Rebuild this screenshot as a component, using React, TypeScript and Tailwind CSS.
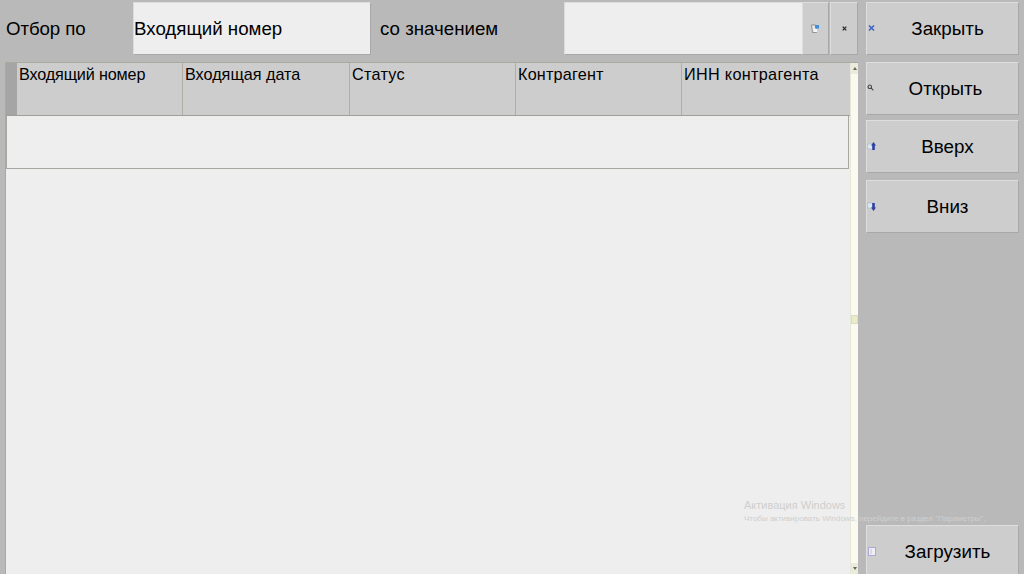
const cols = [
  { t: "Входящий номер", w: "w-[166px]", s: "tracking-[-0.15px]" },
  { t: "Входящая дата", w: "w-[167px]", s: "" },
  { t: "Статус", w: "w-[166px]", s: "tracking-[0.3px]" },
  { t: "Контрагент", w: "w-[166px]", s: "tracking-[0.2px]" },
  { t: "ИНН контрагента", w: "flex-1", s: "tracking-[0.33px]" },
];

function Btn({ label, icon, pad = "pl-[10px]" }: { label: string; icon: React.ReactNode; pad?: string }) {
  return (
    <div className={`relative h-[53px] w-[153px] flex items-center justify-center ${pad} pt-[1px] bg-[#cdcdcd] border border-t-[#dedede] border-l-[#dedede] border-b-[#a8a8a8] border-r-[#a8a8a8] text-[18.8px] text-black`}>
      <span className="absolute left-[1px] top-1/2 -mt-[5px] flex">{icon}</span>
      {label}
    </div>
  );
}

const CloseIcon = () => (
  <svg width="8" height="8" viewBox="0 0 8 8"><path d="M1 1.500l5 5M6 1.500l-5 5" stroke="#3a62c0" strokeWidth="1.500" /></svg>
);
const SearchIcon = () => (
  <svg width="7" height="7" viewBox="0 0 8 8" fill="none" className="-ml-[1px]"><circle cx="3.200" cy="3.200" r="2" stroke="#444" strokeWidth="1.200" /><path d="M4.800 4.800l2.500 2.500" stroke="#444" strokeWidth="1.200" /></svg>
);
const UpIcon = () => (
  <svg width="9" height="9" viewBox="0 0 9 9" className="-ml-[1px]"><rect x="0.500" y="2" width="6" height="5" fill="#dce8f0" stroke="#9fb6c6" strokeWidth="0.600" /><path d="M6.500 0L9 3.500H7.800V8H5.200V3.500H4z" fill="#2f3f9f" /></svg>
);
const DownIcon = () => (
  <svg width="9" height="9" viewBox="0 0 9 9" className="-ml-[1px]"><rect x="0.500" y="1" width="6" height="5" fill="#dce8f0" stroke="#9fb6c6" strokeWidth="0.600" /><path d="M6.500 9L9 5.500H7.800V1H5.200V5.500H4z" fill="#2f3f9f" /></svg>
);
const LoadIcon = () => (
  <svg width="8" height="9" viewBox="0 0 8 9"><rect x="0.500" y="0.500" width="7" height="8" fill="#f1eef5" stroke="#a9a9d6" /><rect x="2" y="2" width="2" height="5" fill="#e3d4dc" /></svg>
);

export default function App() {
  return (
    <div className="relative w-[1024px] h-[574px] overflow-hidden bg-[#b9b9b9] flex font-['Liberation_Sans',Arial,sans-serif] text-black">
      <div className="w-[866px] flex flex-col pl-[5px] pt-[2px]">
        <div className="h-[53px] flex items-center text-[18.7px]">
          <div className="w-[128px] pl-[1px] pt-[1px] tracking-[-0.1px]">Отбор по</div>
          <div className="w-[238px] h-[53px] flex items-center pt-[1px] bg-[#eeeeee] border border-t-[#dcdcdc] border-l-[#dcdcdc] border-b-[#a8a8a8] border-r-[#a8a8a8]">
            Входящий номер
          </div>
          <div className="w-[193px] pl-[9px] pt-[1px]">со значением</div>
          <div className="w-[238px] h-[53px] bg-[#eeeeee] border-t border-t-[#dcdcdc] border-l border-l-[#dcdcdc] border-b border-b-[#a8a8a8]" />
          <div className="w-[27px] h-[53px] flex items-center justify-center bg-[#cdcdcd] border border-t-[#dedede] border-l-[#dedede] border-b-[#a8a8a8] border-r-[#a8a8a8]">
            <svg width="9" height="9" viewBox="0 0 9 9"><path d="M0.500 1h4l1 1v6.500h-4z" fill="#e8e8e8" stroke="#777" strokeWidth="0.700" /><rect x="4" y="1" width="4" height="3.500" fill="#3f8fdc" /><rect x="3" y="5" width="3" height="3" fill="#f5f5ff" /></svg>
          </div>
          <div className="w-[28px] h-[53px] ml-[1px] flex items-center justify-center bg-[#cdcdcd] border border-t-[#dedede] border-l-[#dedede] border-b-[#a8a8a8] border-r-[#a8a8a8]">
            <svg width="5" height="5" viewBox="0 0 5 5"><path d="M0.700 0.700l3.600 3.600M4.300 0.700l-3.600 3.600" stroke="#222" strokeWidth="1.200" /></svg>
          </div>
        </div>

        <div className="mt-[7px] w-[853px] flex-1 flex border-t border-l border-[#a9a9a0] bg-[#eeeeee] min-h-0">
          <div className="flex-1 flex flex-col min-w-0">
            <div className="h-[53px] flex bg-[#cdcdcd] border-b border-b-[#a0a09a]">
              <div className="w-[11px] bg-[#a5a5a5]" />
              {cols.map((c) => (
                <div key={c.t} className={`${c.w} ${c.s} h-full pl-[2px] pt-[1px] text-[16.2px] leading-[20px] border-r border-r-[#aeaea6] last:border-r-0`}>
                  {c.t}
                </div>
              ))}
            </div>
            <div className="h-[53px] mr-[1px] border border-t-0 border-[#a8a8a2] bg-[#eeeeee]" />
            <div className="flex-1" />
          </div>
          <div className="w-[8px] flex flex-col justify-between bg-[#fbfaf0] border-l border-[#e6e6da] relative">
            <div className="h-[11px] bg-[#ebebdc] flex items-center justify-center">
              <div className="w-0 h-0 border-l-[2px] border-r-[2px] border-b-[3px] border-l-transparent border-r-transparent border-b-[#666]" />
            </div>
            <div className="h-[9px] mt-[1px] bg-[#ebebc8] border border-[#dcdcc4]" />
            <div className="h-[11px] bg-[#ebebdc] flex items-center justify-center">
              <div className="w-0 h-0 border-l-[2px] border-r-[2px] border-t-[3px] border-l-transparent border-r-transparent border-t-[#666]" />
            </div>
          </div>
        </div>
      </div>

      <div className="flex-1 flex flex-col pt-[2px]">
        <Btn label="Закрыть" icon={<CloseIcon />} />
        <div className="mt-[7px]"><Btn label="Открыть" icon={<SearchIcon />} pad="pl-[6px]" /></div>
        <div className="mt-[5px]"><Btn label="Вверх" icon={<UpIcon />} /></div>
        <div className="mt-[7px]"><Btn label="Вниз" icon={<DownIcon />} /></div>
        <div className="mt-auto -mb-[4px]"><Btn label="Загрузить" icon={<LoadIcon />} /></div>
      </div>

      <div className="absolute left-[744px] top-[499px] pointer-events-none">
        <div className="text-[11px] leading-[13px] text-[#cfcfcf]">Активация Windows</div>
        <div className="text-[8px] leading-[11px] mt-[1px] whitespace-nowrap text-[#cfcfcf]">Чтобы активировать Windows, перейдите в раздел "Параметры".</div>
      </div>
    </div>
  );
}
